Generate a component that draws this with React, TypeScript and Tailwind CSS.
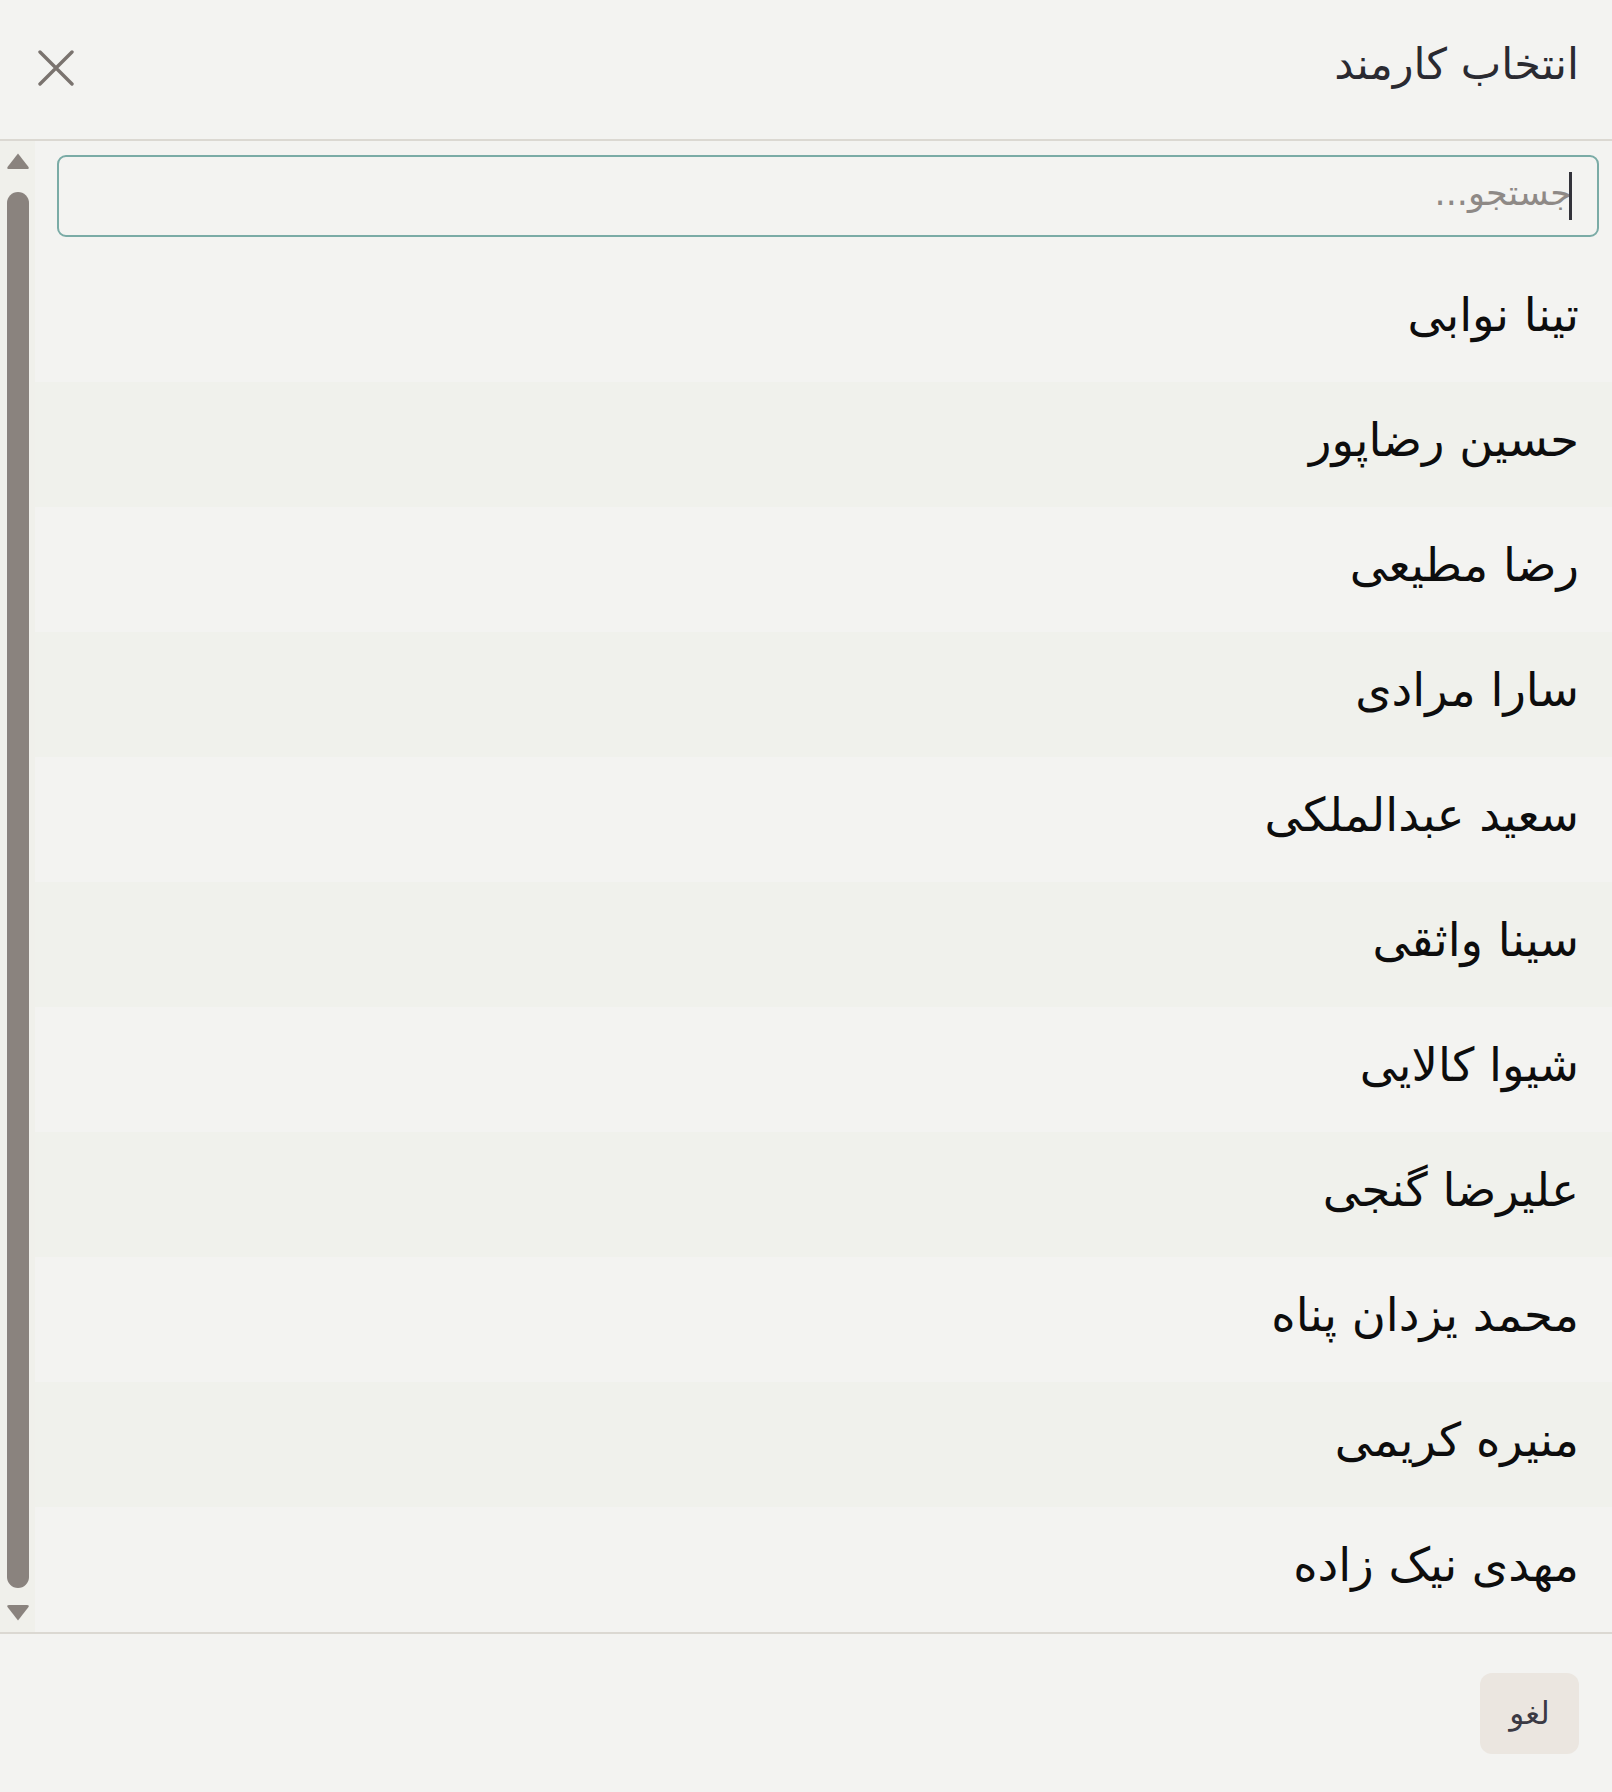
import React from "react";

const names = [
  "تینا نوابی",
  "حسین رضاپور",
  "رضا مطیعی",
  "سارا مرادی",
  "سعید عبدالملکی",
  "سینا واثقی",
  "شیوا کالایی",
  "علیرضا گنجی",
  "محمد یزدان پناه",
  "منیره کریمی",
  "مهدی نیک زاده",
];

export default function App() {
  return (
    <div
      dir="rtl"
      className="w-[1612px] h-[1792px] bg-[#f3f3f1] flex flex-col overflow-hidden"
      style={{ fontFamily: '"DejaVu Sans", sans-serif' }}
    >
      {/* header */}
      <div className="h-[141px] shrink-0 flex items-center justify-between pr-[33px] pl-[38px] pb-[4px] border-b-2 border-[#dbd8d2]">
        <h1 className="text-[43px] leading-none text-[#2a2a31] font-normal pb-[6px]">انتخاب کارمند</h1>
        <button className="w-[36px] h-[36px] flex items-center justify-center">
          <svg width="36" height="36" viewBox="0 0 36 36" fill="none">
            <path d="M2 2 L34 34 M34 2 L2 34" stroke="#7a736f" strokeWidth="3.4" strokeLinecap="round" />
          </svg>
        </button>
      </div>

      {/* body */}
      <div dir="ltr" className="flex-1 min-h-0 flex flex-row">
        {/* scrollbar */}
        <div className="w-[35px] shrink-0 bg-[#f0f0eb] flex flex-col items-center pt-[11px] pb-[10px]">
          <svg width="24" height="18" viewBox="0 0 24 18">
            <path d="M12 1.5 L22.5 15 Q23.5 17 21 17 L3 17 Q0.5 17 1.5 15 Z" fill="#8a837e" />
          </svg>
          <div className="w-[22px] flex-1 mt-[22px] mb-[16px] rounded-full bg-[#8a837e]" />
          <svg width="24" height="18" viewBox="0 0 24 18">
            <path d="M12 16.5 L22.5 3 Q23.5 1 21 1 L3 1 Q0.5 1 1.5 3 Z" fill="#8a837e" />
          </svg>
        </div>

        {/* content */}
        <div dir="rtl" className="flex-1 flex flex-col pt-[14px]">
          <div className="pr-[13px] pl-[22px]">
            <div className="relative">
              <input
                placeholder="جستجو..."
                className="w-full h-[82px] rounded-[9px] border-2 border-[#7aaba6] bg-transparent pr-[25px] pb-[6px] text-[35px] text-[#222] placeholder:text-[#8e8986] outline-none"
                style={{ fontFamily: '"DejaVu Sans", sans-serif' }}
              />
              <span className="absolute right-[27px] top-[17px] h-[48px] w-[3px] bg-[#33333b] pointer-events-none" />
            </div>
          </div>
          <div className="mt-[20px] flex flex-col">
            {names.map((n, i) => (
              <div
                key={n}
                className={
                  "h-[125px] flex items-center pr-[33px] pb-[9px] text-[46.5px] leading-none text-[#0d0d0d] " +
                  (i % 2 === 1 ? "bg-[#f0f1ec]" : "bg-[#f3f3f1]")
                }
              >
                {n}
              </div>
            ))}
          </div>
        </div>
      </div>

      {/* footer */}
      <div className="h-[160px] shrink-0 border-t-2 border-[#dbd8d2] flex items-center justify-start pr-[33px]">
        <button
          className="w-[99px] h-[81px] rounded-[12px] bg-[#ebe6e0] text-[31px] text-[#3b3a44] flex items-center justify-center"
          style={{ fontFamily: '"DejaVu Sans", sans-serif' }}
        >
          لغو
        </button>
      </div>
    </div>
  );
}
